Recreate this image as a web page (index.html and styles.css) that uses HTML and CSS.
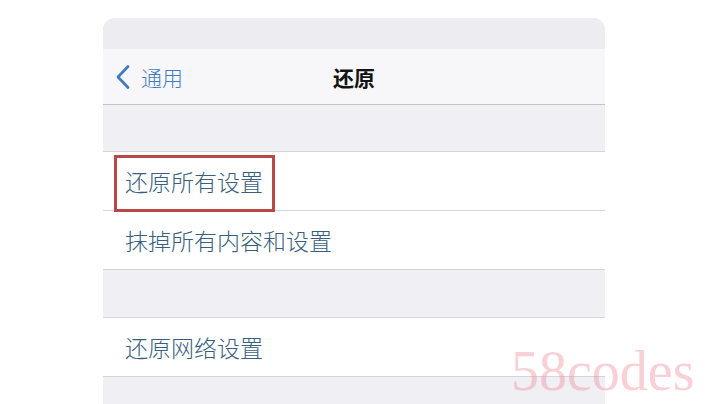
FILE: index.html
```html
<!DOCTYPE html>
<html>
<head>
  <meta charset="UTF-8" />
  <title>还原</title>
  <link rel="stylesheet" href="styles.css">
</head>
<body>
  <div class="page">
    <div class="phone">
      <div class="status"></div>

      <!-- Navigation bar -->
      <div class="nav">
        <div class="back">
          <svg class="chevron" width="16" height="26" viewBox="0 0 16 26">
            <path d="M13 2.5 L3 13 L13 23.5" fill="none" stroke="#3f7cc0" stroke-width="2.8" stroke-linecap="round" stroke-linejoin="round"/>
          </svg>
          <span>通用</span>
        </div>
        <div class="title">还原</div>
        <div></div>
      </div>

      <div class="gap"></div>

      <div class="group">
        <div class="row marked">
          <span>还原所有设置</span>
          <div class="highlight"></div>
        </div>
        <div class="row">抹掉所有内容和设置</div>
      </div>

      <div class="gap tall"></div>

      <div class="group">
        <div class="row">还原网络设置</div>
      </div>

      <div class="tail"></div>
    </div>
  </div>

  <div class="watermark">58codes</div>
</body>
</html>
```

FILE: styles.css
```css
body {
  margin: 0;
  background-color: #ffffff;
  font-family: 'Noto Sans CJK SC', 'Noto Sans', sans-serif;
}
.page {
  padding: 18px 0 0 103px;
}
.phone {
  width: 502px;
  background-color: #efeff4;
  border-radius: 12px 12px 0 0;
  overflow: hidden;
}
.status {
  height: 31px;
  background-color: #ececf1;
}
.nav {
  height: 55px;
  background-color: #f7f7f9;
  border-bottom: 1px solid #c4c4c9;
  display: grid;
  grid-template-columns: 1fr auto 1fr;
  align-items: center;
}
.back {
  display: flex;
  align-items: center;
  gap: 10px;
  padding-left: 12px;
  color: #3f7cc0;
  font-size: 21px;
  font-weight: 300;
}
.chevron {
  display: block;
}
.title {
  font-size: 21px;
  font-weight: 600;
  color: #141414;
}
.gap {
  height: 46px;
}
.gap.tall {
  height: 47px;
}
.group {
  background-color: #ffffff;
  border-top: 1px solid #d6d6da;
  border-bottom: 1px solid #d6d6da;
}
.row {
  height: 58px;
  display: flex;
  align-items: center;
  padding-left: 22px;
  font-size: 23px;
  font-weight: 300;
  color: #3a5f7e;
}
.row + .row {
  border-top: 1px solid #d6d6da;
}
.marked {
  position: relative;
}
.highlight {
  position: absolute;
  left: 11px;
  top: 3px;
  width: 155px;
  height: 51px;
  border: 3px solid #b9474a;
}
.tail {
  height: 30px;
}
.watermark {
  position: absolute;
  left: 511px;
  top: 343px;
  font-family: 'Liberation Serif', serif;
  font-size: 56px;
  line-height: 56px;
  color: rgba(240, 150, 165, 0.45);
}
```
